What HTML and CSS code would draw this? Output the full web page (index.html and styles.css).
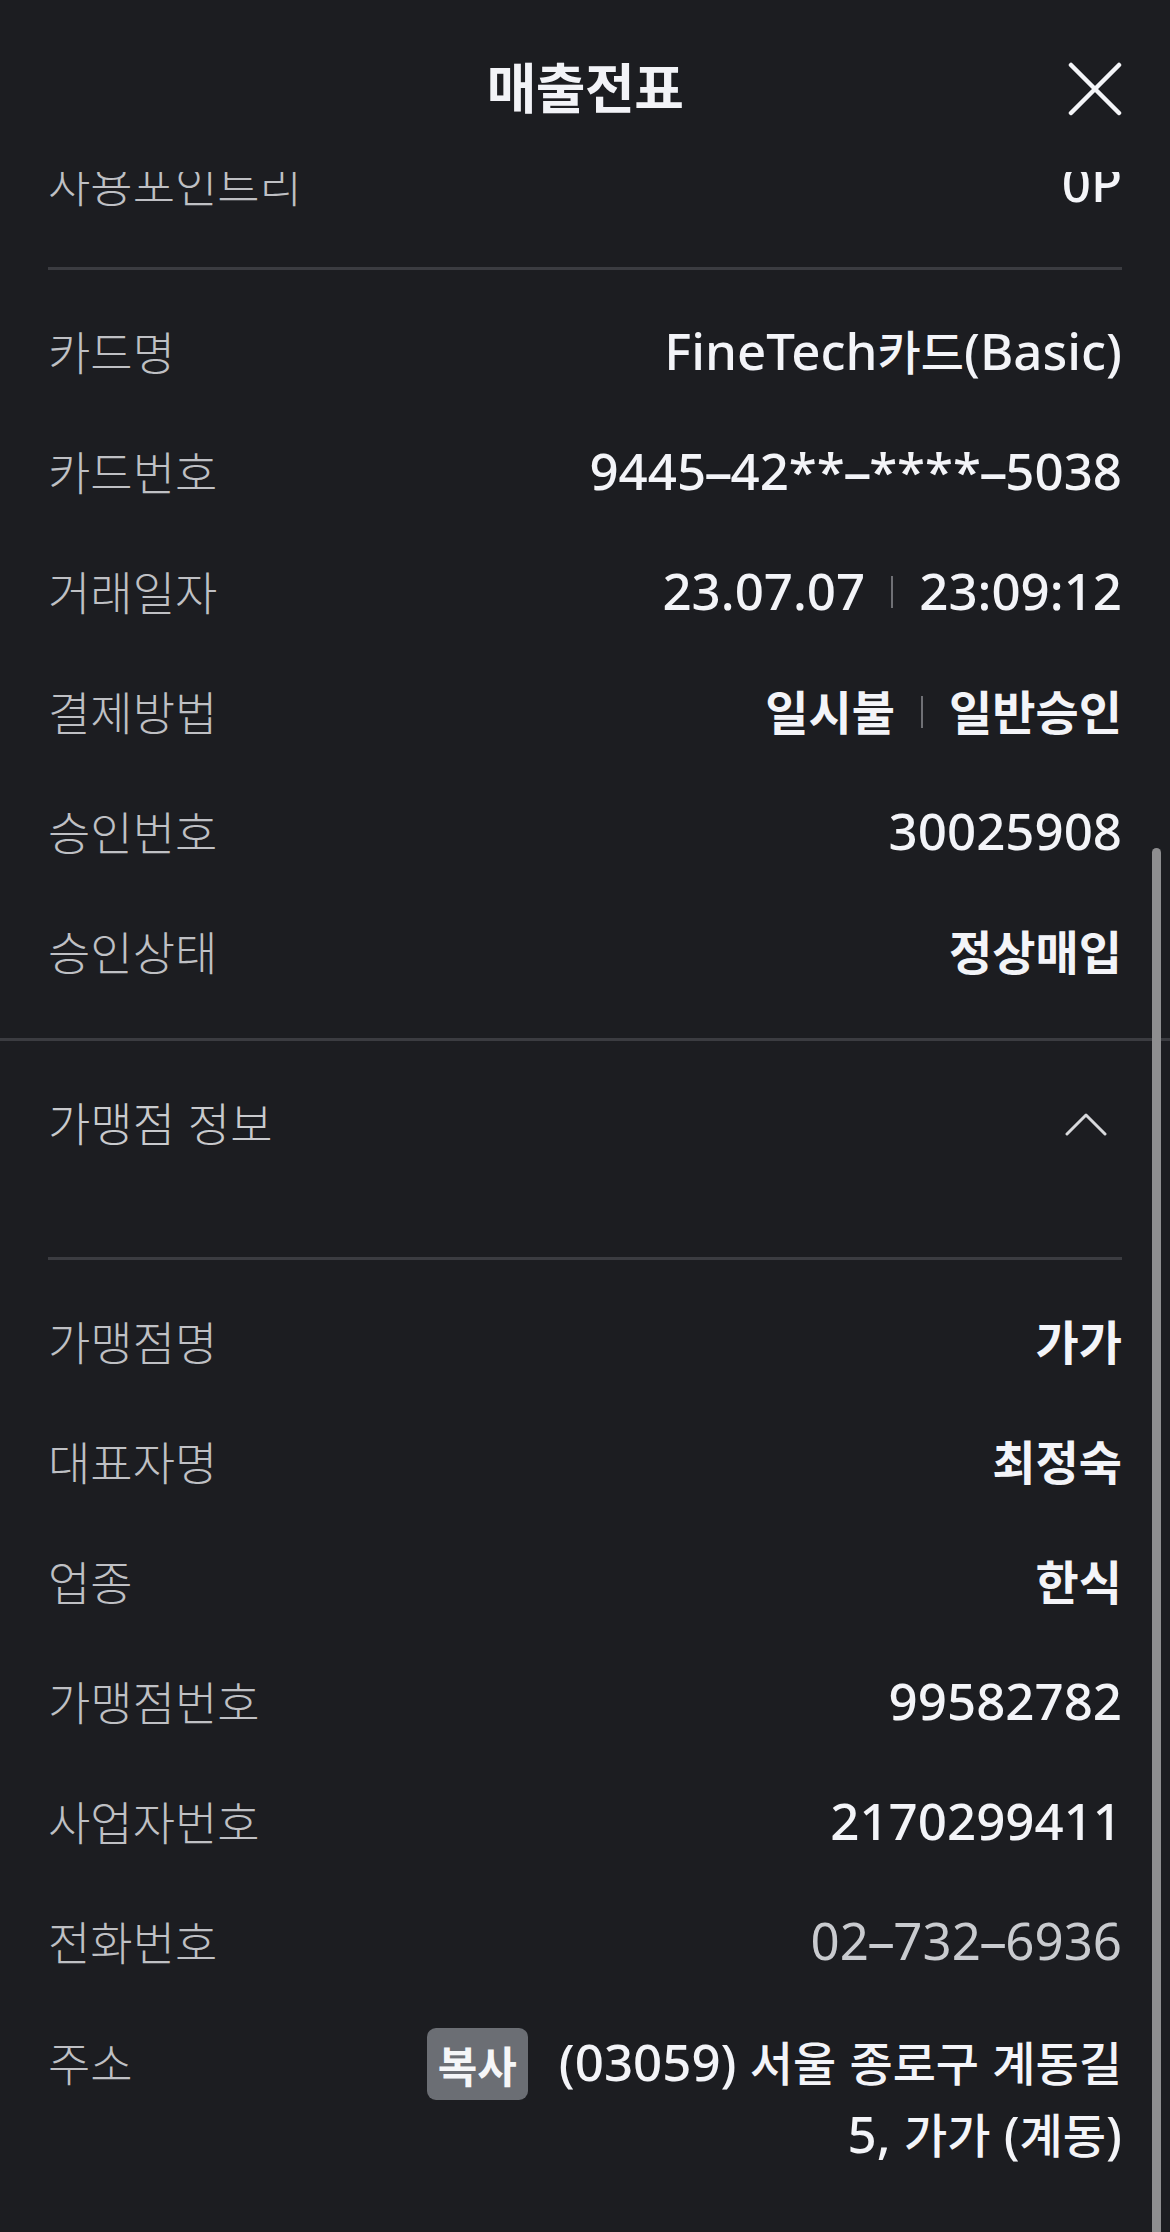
FILE: index.html
```html
<!DOCTYPE html>
<html lang="ko">
<head>
<meta charset="utf-8">
<title>매출전표</title>
<link rel="stylesheet" href="styles.css">
</head>
<body>
<div class="screen">
  <header class="topbar">
    <div></div>
    <h1 class="title">매출전표</h1>
    <button class="close" aria-label="닫기">
      <svg width="54" height="54" viewBox="0 0 54 54"><path d="M3 3 L51 51 M51 3 L3 51" stroke="#f4f5f8" stroke-width="4.5" stroke-linecap="round" fill="none"/></svg>
    </button>
  </header>

  <main class="scroll">
    <div class="content">
      <section class="card-info">
        <div class="row"><span class="label">사용포인트리</span><span class="val">0P</span></div>
        <hr class="sep">
        <div class="row"><span class="label">카드명</span><span class="val">FineTech<span class="ko">카드</span>(Basic)</span></div>
        <div class="row"><span class="label">카드번호</span><span class="val">9445<span class="hy">-</span>42**<span class="hy">-</span>****<span class="hy">-</span>5038</span></div>
        <div class="row"><span class="label">거래일자</span><span class="val">23.07.07<i class="bar"></i>23:09:12</span></div>
        <div class="row"><span class="label">결제방법</span><span class="val ko strong">일시불<i class="bar"></i>일반승인</span></div>
        <div class="row"><span class="label">승인번호</span><span class="val">30025908</span></div>
        <div class="row"><span class="label">승인상태</span><span class="val ko strong">정상매입</span></div>
      </section>

      <section class="merchant">
        <div class="acc-head">
          <span class="acc-title">가맹점 정보</span>
          <svg class="chev" width="42" height="24" viewBox="0 0 42 24"><path d="M2 22 L21 3 L40 22" stroke="#d8d9dc" stroke-width="3" stroke-linecap="round" stroke-linejoin="round" fill="none"/></svg>
        </div>
        <div class="acc-body">
          <hr class="sep">
          <div class="row"><span class="label">가맹점명</span><span class="val ko strong">가가</span></div>
          <div class="row"><span class="label">대표자명</span><span class="val ko strong">최정숙</span></div>
          <div class="row"><span class="label">업종</span><span class="val ko strong">한식</span></div>
          <div class="row"><span class="label">가맹점번호</span><span class="val">99582782</span></div>
          <div class="row"><span class="label">사업자번호</span><span class="val">2170299411</span></div>
          <div class="row"><span class="label">전화번호</span><span class="val phone">02<span class="hy">-</span>732<span class="hy">-</span>6936</span></div>
          <div class="row addr-row">
            <span class="label">주소</span>
            <div class="addr">
              <button class="copy">복사</button>
              <span class="addr-text">(03059) <span class="ko">서울 종로구 계동길</span><br>5, <span class="ko">가가</span> (<span class="ko">계동</span>)</span>
            </div>
          </div>
        </div>
      </section>
    </div>
  </main>

  <div class="scrollbar"></div>
</div>
</body>
</html>
```

FILE: styles.css
```css
* { box-sizing: border-box; }
html, body {
  margin: 0;
  padding: 0;
  background: #1c1d21;
}
body {
  width: 1170px;
  height: 2232px;
  overflow: hidden;
  font-family: "Noto Sans CJK KR", "Noto Sans", sans-serif;
  color: #f3f4f8;
}
.screen {
  position: relative;
  width: 1170px;
  height: 2232px;
  overflow: hidden;
}
.topbar {
  height: 172px;
  padding: 0 48px;
  display: grid;
  grid-template-columns: 1fr auto 1fr;
  align-items: center;
  background: #1c1d21;
  position: relative;
  z-index: 2;
}
.title {
  margin: 0;
  font-size: 54px;
  font-weight: 700;
  line-height: 64px;
  color: #f2f3f7;
  letter-spacing: -0.5px;
}
.close {
  justify-self: end;
  margin: 6px 0 0;
  padding: 0;
  border: 0;
  background: none;
  width: 54px;
  height: 54px;
  display: block;
}
.close svg { display: block; }

.scroll {
  height: 2060px;
  overflow: hidden;
}
.content {
  margin-top: -50px;
}
.card-info {
  padding: 0 48px 28px;
}
.row {
  height: 120px;
  display: flex;
  justify-content: space-between;
  align-items: center;
}
.label {
  font-size: 46px;
  font-weight: 300;
  color: #bfc0c4;
  line-height: 64px;
  white-space: nowrap;
}
.val {
  font-family: "Noto Sans", "Noto Sans CJK KR", sans-serif;
  font-size: 51px;
  font-weight: 500;
  line-height: 68px;
  color: #f3f4f8;
  white-space: nowrap;
  display: flex;
  align-items: center;
}
.ko {
  font-family: "Noto Sans CJK KR", sans-serif;
  font-size: 47px;
}
.strong { font-weight: 700; }
.hy {
  display: inline-block;
  transform: scaleX(1.9);
  margin: 0 4px;
}
.val.phone {
  font-weight: 400;
  color: #c9cbcf;
}
.bar {
  display: inline-block;
  width: 2px;
  height: 32px;
  background: #6f7075;
  margin: 4px 26px 0;
}
.sep {
  margin: 25px 0 20px;
  border: 0;
  height: 3px;
  background: #3b3c41;
}
.merchant {
  border-top: 3px solid #3b3c41;
}
.acc-head {
  height: 160px;
  padding: 0 48px;
  display: flex;
  justify-content: space-between;
  align-items: center;
}
.acc-title {
  font-size: 46px;
  font-weight: 300;
  color: #c9cacd;
  line-height: 64px;
}
.chev {
  display: block;
  margin: 6px 15px 0 0;
}
.acc-body {
  padding: 0 48px;
}
.acc-body > .sep {
  margin: 56px 0 20px;
}
.addr-row {
  height: auto;
  align-items: flex-start;
  padding-top: 25px;
}
.addr-row .label {
  line-height: 72px;
}
.addr {
  display: flex;
  align-items: flex-start;
  gap: 31px;
}
.copy {
  margin-top: 3px;
  height: 72px;
  padding: 0 11px;
  border: 0;
  border-radius: 9px;
  background: #6b6e74;
  color: #f5f6f8;
  font-family: "Noto Sans CJK KR", sans-serif;
  font-size: 43px;
  font-weight: 700;
  line-height: 72px;
}
.addr-text {
  font-family: "Noto Sans", "Noto Sans CJK KR", sans-serif;
  font-size: 51px;
  font-weight: 500;
  line-height: 72px;
  text-align: right;
  color: #f3f4f8;
  white-space: nowrap;
}
.addr-text .ko { font-weight: 500; }
.scrollbar {
  position: absolute;
  top: 848px;
  right: 9px;
  width: 9px;
  height: 1420px;
  border-radius: 5px;
  background: #8e8e90;
  z-index: 3;
}
```
